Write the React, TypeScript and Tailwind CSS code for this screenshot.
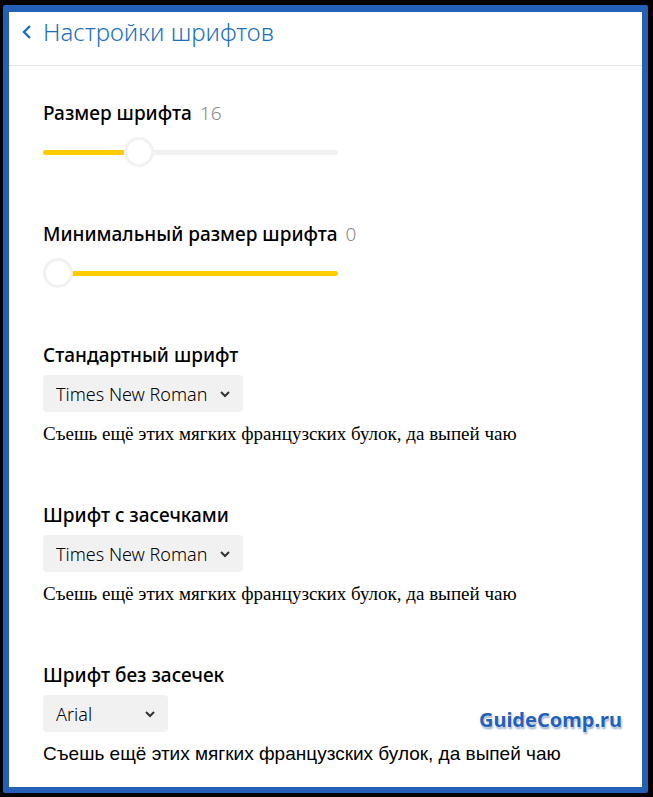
import { useState, type ReactNode } from 'react';

const FONT_SIZES = [9, 10, 11, 12, 13, 14, 15, 16, 17, 18, 20, 22, 24, 26, 28, 30, 32, 34, 36, 40, 44, 48, 56, 72];
const MIN_SIZES = [0, 6, 7, 8, 9, 10, 11, 12, 13, 14, 15, 16, 17, 18, 20, 22, 24];
const SAMPLE = 'Съешь ещё этих мягких французских булок, да выпей чаю';

const THUMB = 30;

type SliderProps = { id: string; label: string; sizes: number[]; initial: number; trail: 'before' | 'after' };

function SizeSlider({ id, label, sizes, initial, trail }: SliderProps) {
  const [index, setIndex] = useState(initial);
  const share = index / (sizes.length - 1);
  const thumbLeft = `calc((100% - ${THUMB}px) * ${share})`;
  const [left, right] = trail === 'before' ? ['#fc0', '#f1f1f1'] : ['#f1f1f1', '#fc0'];
  return (
    <section className="h-[121px]">
      <div className="flex h-7 items-center gap-2 text-[19px] leading-7">
        <label htmlFor={id} className="font-medium">{label}</label>
        <output htmlFor={id} className="font-light text-[#888]">{sizes[index]}</output>
      </div>
      <div className="mt-[10px] grid h-[30px] w-[295px] max-w-full items-center">
        <div
          className="col-start-1 row-start-1 h-[5px] rounded-full"
          style={{ background: `linear-gradient(to right, ${left} ${thumbLeft}, ${right} ${thumbLeft})` }}
        />
        <input
          id={id}
          type="range"
          min={0}
          max={sizes.length - 1}
          value={index}
          onChange={(e) => setIndex(Number(e.target.value))}
          className="col-start-1 row-start-1 h-[30px] w-full cursor-pointer appearance-none bg-transparent [&::-webkit-slider-thumb]:size-[30px] [&::-webkit-slider-thumb]:appearance-none [&::-webkit-slider-thumb]:rounded-full [&::-webkit-slider-thumb]:border-3 [&::-webkit-slider-thumb]:border-solid [&::-webkit-slider-thumb]:border-[#f1f1f1] [&::-webkit-slider-thumb]:bg-white"
        />
      </div>
    </section>
  );
}

type PickerProps = { id: string; label: string; value: string; width: string; children: ReactNode };

function FontPicker({ id, label, value, width, children }: PickerProps) {
  return (
    <section className="h-40 last:h-auto">
      <label htmlFor={id} className="block text-[19px] leading-7 font-medium">{label}</label>
      <div className={`mt-[6px] grid items-center ${width}`}>
        <select
          id={id}
          defaultValue={value}
          className="col-start-1 row-start-1 h-[37px] w-full appearance-none rounded bg-[#f1f1f1] pl-[13px] text-lg font-[350] text-black"
        >
          <option>Times New Roman</option>
          <option>Arial</option>
          <option>Courier New</option>
        </select>
        <svg viewBox="0 0 10 8" className="pointer-events-none col-start-1 row-start-1 mr-[13px] h-2 w-[10px] justify-self-end" fill="none" stroke="#333" strokeWidth="2">
          <path d="M1 2l4 4 4-4" />
        </svg>
      </div>
      {children}
    </section>
  );
}

export default function App() {
  return (
    <div className="min-h-screen bg-black pt-[5px] pr-[5px] pb-1 pl-[3px] font-['Noto_Sans','Open_Sans',sans-serif] text-black">
      <main className="relative flex min-h-[788px] flex-col rounded-xs border-x-6 border-t-7 border-b-6 border-[#2560b8] bg-white">
        <header className="flex h-[54px] items-center border-b border-[#e4e4e4] pb-[14px] pl-[13px]">
          <button type="button" className="flex items-center gap-[11px] text-2xl font-[350] text-[#1d6fc0]">
            <svg viewBox="0 0 10 14" className="h-[14px] w-[10px]" fill="none" stroke="currentColor" strokeWidth="2.4">
              <path d="M8 1L2 7l6 6" />
            </svg>
            <h1 className="font-[350]">Настройки шрифтов</h1>
          </button>
        </header>
        <div className="px-[34px] pt-[33px]">
          <SizeSlider id="size" label="Размер шрифта" sizes={FONT_SIZES} initial={7} trail="before" />
          <SizeSlider id="min-size" label="Минимальный размер шрифта" sizes={MIN_SIZES} initial={0} trail="after" />
          <FontPicker id="standard" label="Стандартный шрифт" value="Times New Roman" width="w-[200px]">
            <p className="mt-[10px] font-['Liberation_Serif',serif] text-[19px] leading-6">{SAMPLE}</p>
          </FontPicker>
          <FontPicker id="serif" label="Шрифт с засечками" value="Times New Roman" width="w-[200px]">
            <p className="mt-[10px] font-['Liberation_Serif',serif] text-[19px] leading-6">{SAMPLE}</p>
          </FontPicker>
          <FontPicker id="sans" label="Шрифт без засечек" value="Arial" width="w-[125px]">
            <p className="mt-[10px] font-['Liberation_Sans',sans-serif] text-[19px] leading-6">{SAMPLE}</p>
          </FontPicker>
        </div>
        <div className="pointer-events-none absolute right-5 bottom-[55px] text-xl leading-6 font-bold text-[#2560b8] [text-shadow:0_0_1px_#fff,0_0_2px_#fff,1px_2px_2px_#8fa6c4]">
          GuideComp.ru
        </div>
      </main>
    </div>
  );
}
